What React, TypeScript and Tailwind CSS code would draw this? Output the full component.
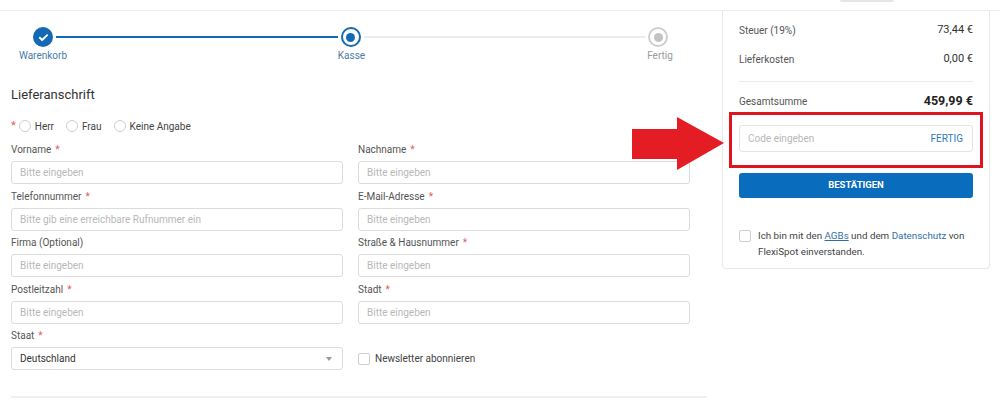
import React from "react";

const Req = () => <span className="text-[#e25b5b] ml-1">*</span>;

const Field = ({ label, required, placeholder }: { label: string; required?: boolean; placeholder: string }) => (
  <div className="flex flex-col">
    <div className="h-[17px] text-[10px] leading-[17px] text-[#555]">
      {label}
      {required && <Req />}
    </div>
    <div className="mt-[3px] h-[23px] border border-[#dcdcdc] rounded-[3px] flex items-center px-[8px] text-[10px] text-[#b8b8b8]">
      {placeholder}
    </div>
  </div>
);

const Radio = ({ label }: { label: string }) => (
  <div className="flex items-center gap-[4px] mr-[12px]">
    <span className="w-[12px] h-[12px] rounded-full border border-[#cfcfcf] bg-white" />
    <span className="text-[10px] text-[#444]">{label}</span>
  </div>
);

export default function App() {
  return (
    <div className="w-[1000px] h-[407px] overflow-hidden bg-white relative" style={{ fontFamily: "Roboto, 'Liberation Sans', sans-serif" }}>
      {/* header strip */}
      <div className="h-[11px] border-b border-[#ececec] relative">
        <div className="absolute left-[840px] top-0 w-[54px] h-[2px] bg-[#e6e6e6] rounded-b" />
      </div>

      <div className="flex pl-[11px]">
        {/* left column */}
        <div className="w-[696px]">
          {/* stepper */}
          <div className="pt-[16px] pr-[22px] pl-[22px] w-[679px]">
            <div className="flex items-center">
              <div className="w-[20px] h-[20px] rounded-full bg-[#1469b5] flex items-center justify-center">
                <svg width="11" height="11" viewBox="0 0 24 24" fill="none" stroke="white" strokeWidth="4" strokeLinecap="round" strokeLinejoin="round">
                  <path d="M4 12.5l5 5L20 7" />
                </svg>
              </div>
              <div className="flex-1 h-[2px] bg-[#1469b5] mx-[3px]" />
              <div className="w-[20px] h-[20px] rounded-full border-[2px] border-[#1469b5] flex items-center justify-center">
                <span className="w-[9px] h-[9px] rounded-full bg-[#1469b5]" />
              </div>
              <div className="flex-1 h-[2px] bg-[#ececec] mx-[3px]" />
              <div className="w-[20px] h-[20px] rounded-full border-[2px] border-[#cfcfcf] flex items-center justify-center">
                <span className="w-[9px] h-[9px] rounded-full bg-[#c4c4c4]" />
              </div>
            </div>
          </div>
          <div className="flex justify-between w-[679px] pl-[2px] mt-[1px] text-[10px] leading-[16px]">
            <span className="w-[60px] text-center text-[#4b7bab]">Warenkorb</span>
            <span className="w-[60px] text-center text-[#4b7bab]">Kasse</span>
            <span className="w-[60px] text-center text-[#9a9a9a]">Fertig</span>
          </div>

          <h2 className="mt-[19px] text-[13px] leading-[24px] text-[#333]">Lieferanschrift</h2>

          <div className="mt-[11px] h-[16px] flex items-center">
            <span className="text-[#e25b5b] text-[11px] mr-[3px]">*</span>
            <Radio label="Herr" />
            <Radio label="Frau" />
            <Radio label="Keine Angabe" />
          </div>

          <div className="mt-[7px] w-[679px] grid grid-cols-2 gap-x-[15px] gap-y-[3.5px]">
            <Field label="Vorname" required placeholder="Bitte eingeben" />
            <Field label="Nachname" required placeholder="Bitte eingeben" />
            <Field label="Telefonnummer" required placeholder="Bitte gib eine erreichbare Rufnummer ein" />
            <Field label="E-Mail-Adresse" required placeholder="Bitte eingeben" />
            <Field label="Firma (Optional)" placeholder="Bitte eingeben" />
            <Field label="Straße & Hausnummer" required placeholder="Bitte eingeben" />
            <Field label="Postleitzahl" required placeholder="Bitte eingeben" />
            <Field label="Stadt" required placeholder="Bitte eingeben" />
            <div className="flex flex-col">
              <div className="h-[17px] text-[10px] leading-[17px] text-[#555]">
                Staat
                <Req />
              </div>
              <div className="mt-[3px] h-[23px] border border-[#dcdcdc] rounded-[3px] flex items-center justify-between px-[8px] text-[10px] text-[#333]">
                <span>Deutschland</span>
                <span className="w-0 h-0 border-l-[3px] border-r-[3px] border-t-[4px] border-l-transparent border-r-transparent border-t-[#999] mr-[2px]" />
              </div>
            </div>
            <div className="flex items-end">
              <div className="h-[23px] flex items-center gap-[5px]">
                <span className="w-[12px] h-[12px] border border-[#cfcfcf] rounded-[2px]" />
                <span className="text-[10px] text-[#444]">Newsletter abonnieren</span>
              </div>
            </div>
          </div>

          <div className="mt-[26px] h-[2px] bg-[#efefef]" />
        </div>

        {/* right card */}
        <div className="ml-[15px] w-[268px] h-[258px] border border-t-0 border-[#e8e8e8] rounded-b-[4px] px-[16px] relative">
          <div className="h-[33px] pt-[5px] flex items-center justify-between text-[10px]">
            <span className="text-[#555]">Steuer (19%)</span>
            <span className="text-[#333] text-[11px]">73,44 €</span>
          </div>
          <div className="h-[31px] flex items-center justify-between text-[10px]">
            <span className="text-[#555]">Lieferkosten</span>
            <span className="text-[#333] text-[11px]">0,00 €</span>
          </div>
          <div className="mt-[6px] h-px bg-[#ececec]" />
          <div className="mt-[10px] h-[18px] flex items-center justify-between">
            <span className="text-[10px] text-[#555]">Gesamtsumme</span>
            <span className="text-[12.5px] font-bold text-[#222]">459,99 €</span>
          </div>
          <div className="mt-[15px] h-[27px] border border-[#e4e4e4] rounded-[3px] flex items-center justify-between px-[8px] text-[10px]">
            <span className="text-[#b8b8b8]">Code eingeben</span>
            <span className="text-[#2f79b7] mr-[1px]">FERTIG</span>
          </div>
          <div className="mt-[21px] h-[25px] bg-[#0a6cbd] rounded-[3px] flex items-center justify-center text-white text-[9.5px] font-bold">
            BESTÄTIGEN
          </div>
          <div className="mt-[31px] flex gap-[7px]">
            <span className="mt-[1px] w-[12px] h-[12px] shrink-0 border border-[#cfcfcf] rounded-[2px]" />
            <p className="text-[9.8px] leading-[16px] text-[#444] -mt-[1px]">
              Ich bin mit den <span className="text-[#2f6fa9] underline">AGBs</span> und dem{" "}
              <span className="text-[#2f6fa9]">Datenschutz</span> von FlexiSpot einverstanden.
            </p>
          </div>

          {/* red annotation box */}
          <div className="absolute left-[6px] top-[101px] w-[254px] h-[56px] border-[3px] border-[#e0141f]" />
        </div>
      </div>

      {/* red annotation arrow */}
      <svg className="absolute left-[630px] top-[114px]" width="100" height="60" viewBox="0 0 100 60">
        <polygon points="2,15 47,15 47,3 94,29 47,56 47,45 2,45" fill="#e41d24" />
      </svg>
    </div>
  );
}
